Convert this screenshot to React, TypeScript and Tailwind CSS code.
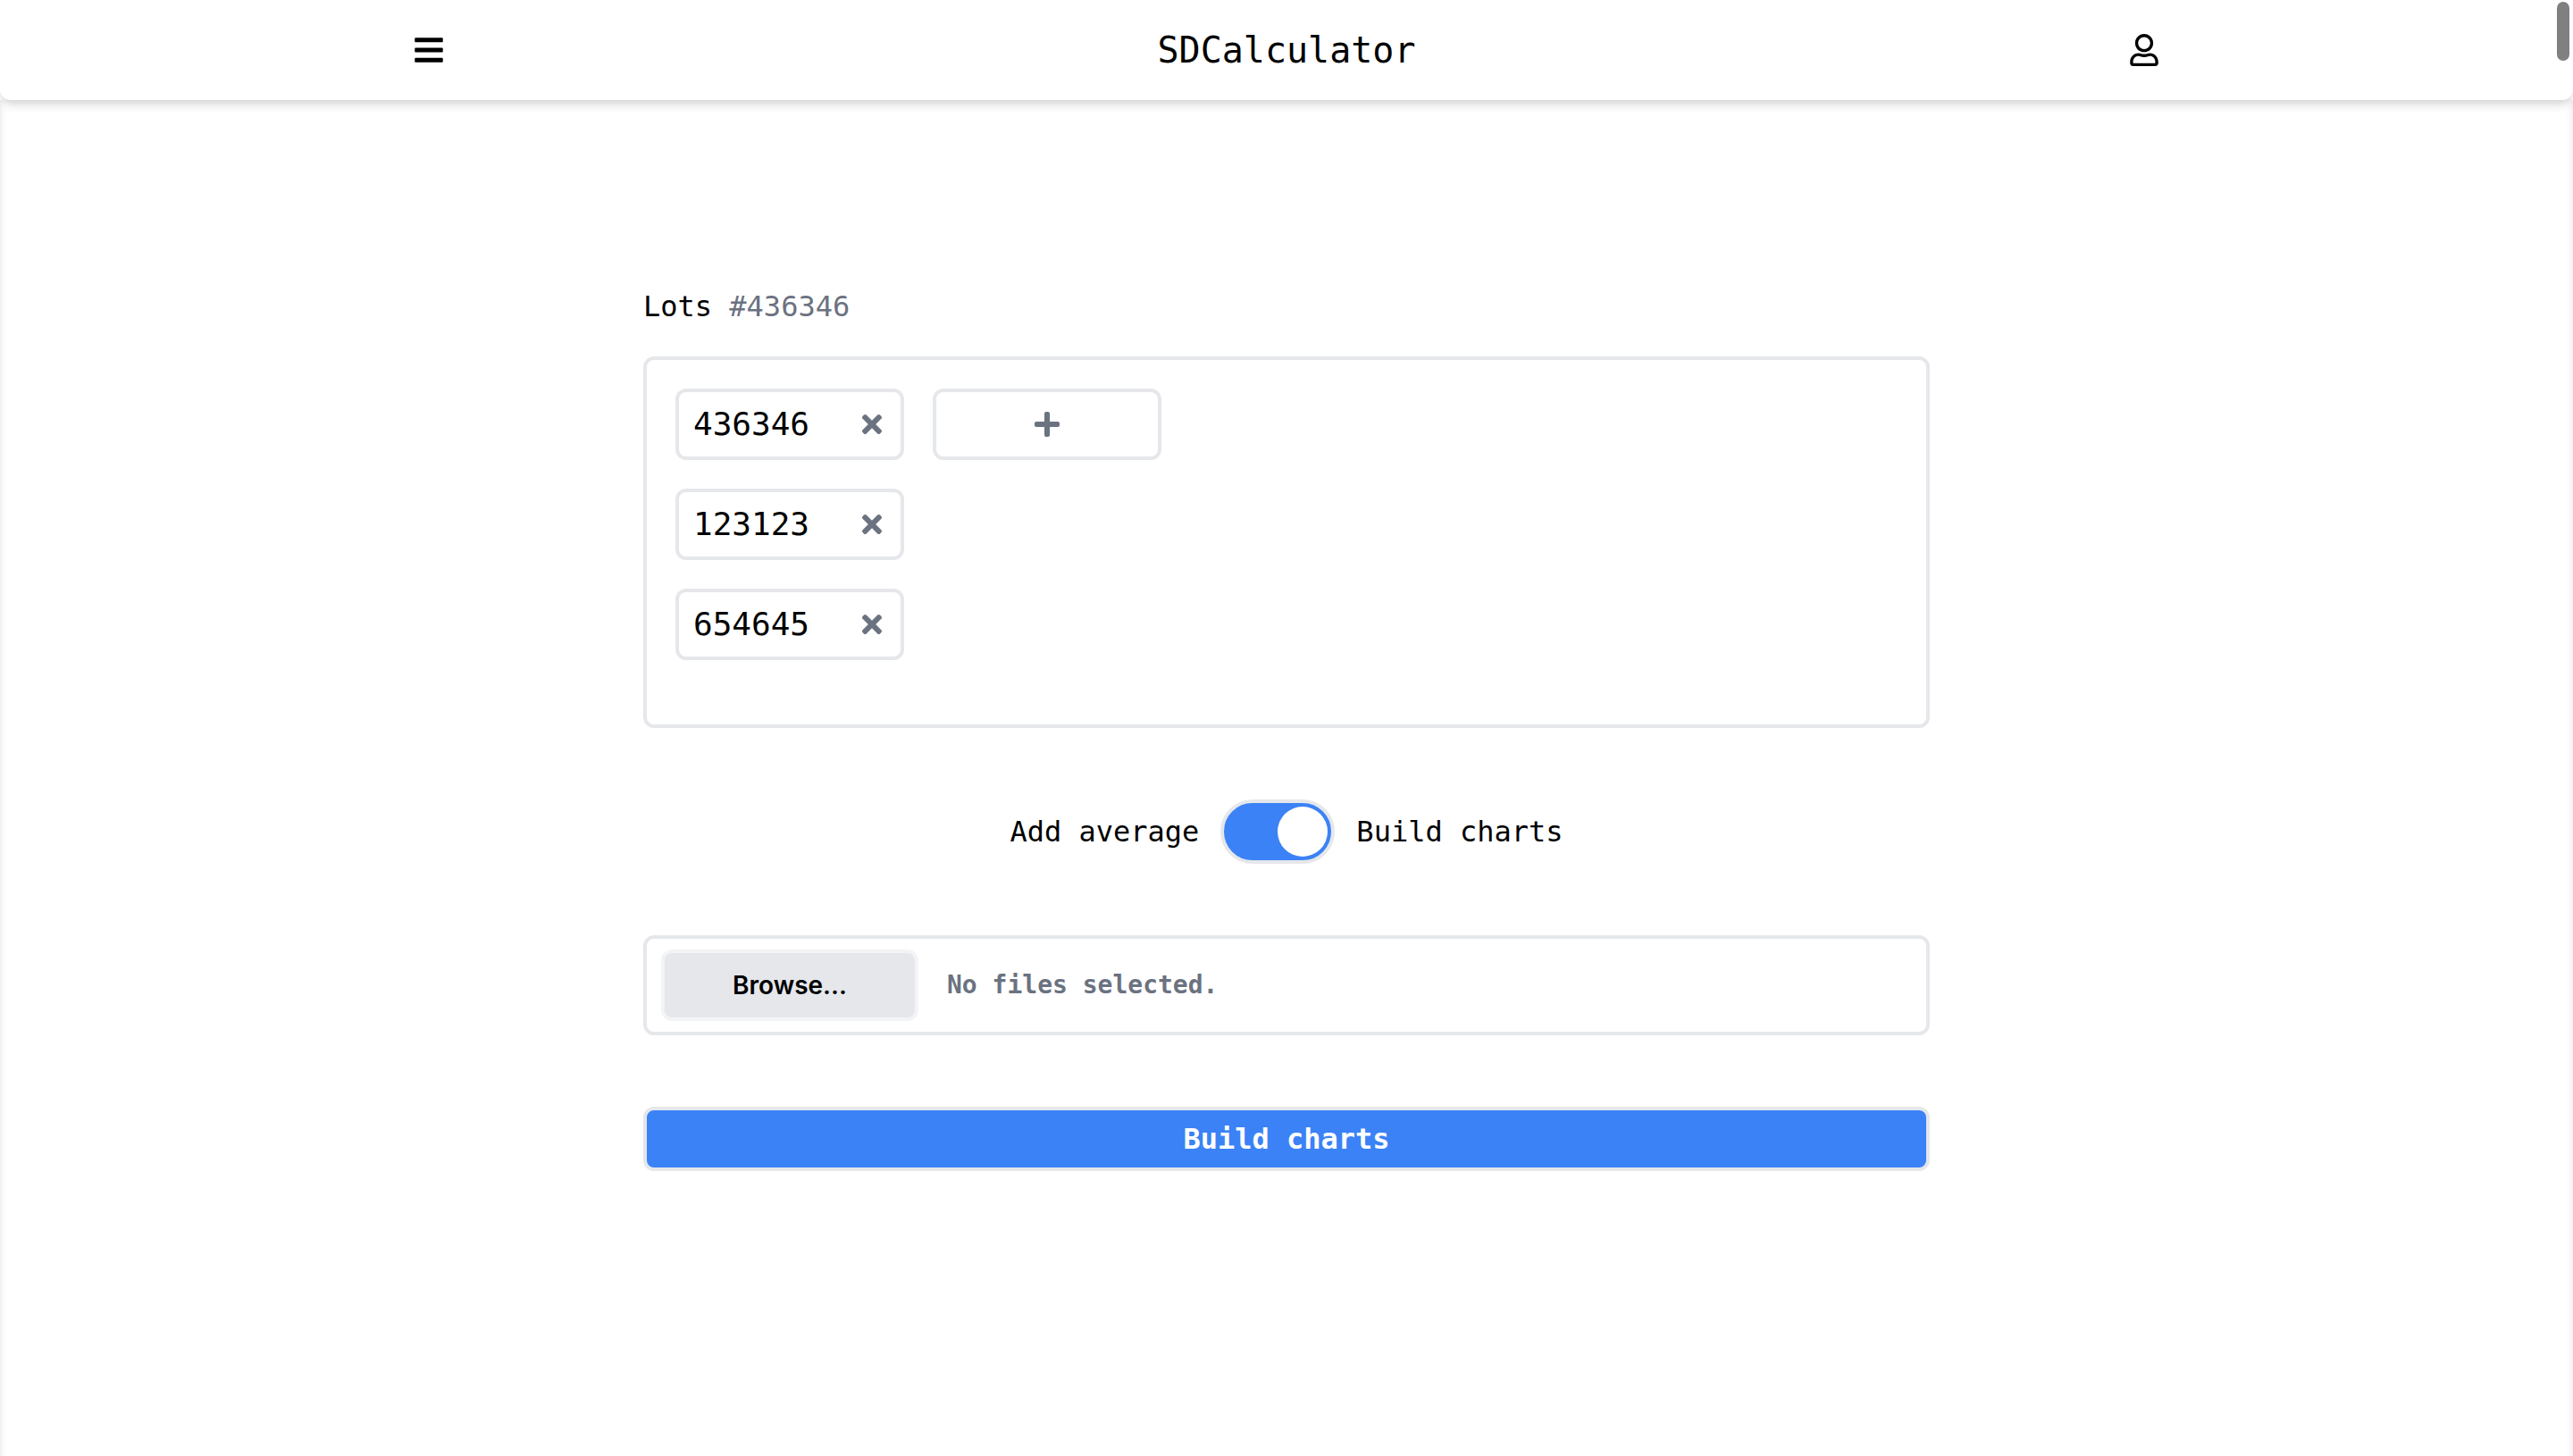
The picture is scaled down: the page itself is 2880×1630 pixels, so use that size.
import { useState } from "react";
import { FaBars, FaPlus, FaRegUser, FaTimes } from "react-icons/fa";

const chip = "h-20 w-64 rounded-xl border-4 border-[#e5e7eb]";

function Header() {
  return (
    <header className="relative z-10 grid h-28 grid-cols-3 place-items-center rounded-b-xl bg-white shadow-[0_8px_12px_-2px_rgba(0,0,0,0.1),0_4px_8px_-2px_rgba(0,0,0,0.1)]">
      <button type="button" aria-label="Menu">
        <FaBars size={36} />
      </button>
      <h1 className="text-[40px] leading-14">SDCalculator</h1>
      <button type="button" aria-label="Account">
        <FaRegUser size={36} />
      </button>
    </header>
  );
}

function Lots() {
  const [lots, setLots] = useState(["436346", "123123", "654645"]);
  return (
    <section className="flex flex-col gap-8">
      <h2 className="text-[32px] leading-12">
        Lots <span className="text-[#6b7280]">#436346</span>
      </h2>
      <div className="grid h-104 grid-flow-col grid-rows-[repeat(3,80px)] content-start justify-start gap-8 rounded-xl border-4 border-[#e5e7eb] p-8">
        {lots.map((lot) => (
          <div key={lot} className={`${chip} flex items-center justify-between px-4`}>
            <span className="text-[36px] leading-14">{lot}</span>
            <button
              type="button"
              aria-label={`Remove ${lot}`}
              className="text-[#6b7280]"
              onClick={() => setLots(lots.filter((l) => l !== lot))}
            >
              <FaTimes size={32} />
            </button>
          </div>
        ))}
        <button type="button" aria-label="Add lot" className={`${chip} flex items-center justify-center text-[#6b7280]`}>
          <FaPlus size={32} />
        </button>
      </div>
    </section>
  );
}

function ModeSwitch() {
  return (
    <label className="flex items-center justify-center gap-6 text-[32px] leading-12">
      <span>Add average</span>
      <input type="checkbox" role="switch" defaultChecked className="peer sr-only" />
      <span className="flex h-18 w-32 items-center justify-start rounded-full border-4 border-[#e5e7eb] bg-[#e5e7eb] p-1 peer-checked:justify-end peer-checked:bg-[#3b82f6]">
        <span className="size-14 rounded-full bg-white" />
      </span>
      <span>Build charts</span>
    </label>
  );
}

function FilePicker() {
  return (
    <label className="flex h-28 items-center gap-8 rounded-xl border-4 border-[#e5e7eb] px-4 text-[28px] leading-10">
      <input type="file" multiple className="sr-only" />
      <span className="flex h-20 w-72 items-center justify-center rounded-xl border-4 border-[#f3f4f6] bg-[#e5e7eb] font-['Inter',sans-serif] font-semibold">
        Browse...
      </span>
      <span className="font-bold text-[#6b7280]">No files selected.</span>
    </label>
  );
}

export default function App() {
  return (
    <div className="relative flex min-h-screen flex-col bg-white font-['DejaVu_Sans_Mono',monospace] text-black">
      <Header />
      <main className="flex flex-1 flex-col items-center justify-center pb-28 shadow-[inset_8px_0_8px_-8px_rgba(0,0,0,0.12),inset_-8px_0_8px_-8px_rgba(0,0,0,0.12)]">
        <form className="flex w-1/2 flex-col gap-20" onSubmit={(e) => e.preventDefault()}>
          <Lots />
          <ModeSwitch />
          <FilePicker />
          <button
            type="submit"
            className="flex h-18 items-center justify-center rounded-xl border-4 border-[#e5e7eb] bg-[#3b82f6] text-[32px] leading-12 font-bold text-white"
          >
            Build charts
          </button>
        </form>
      </main>
      <div className="absolute top-0.5 right-1 z-20 h-[66px] w-3.5 rounded-full bg-[#808080]" />
    </div>
  );
}
